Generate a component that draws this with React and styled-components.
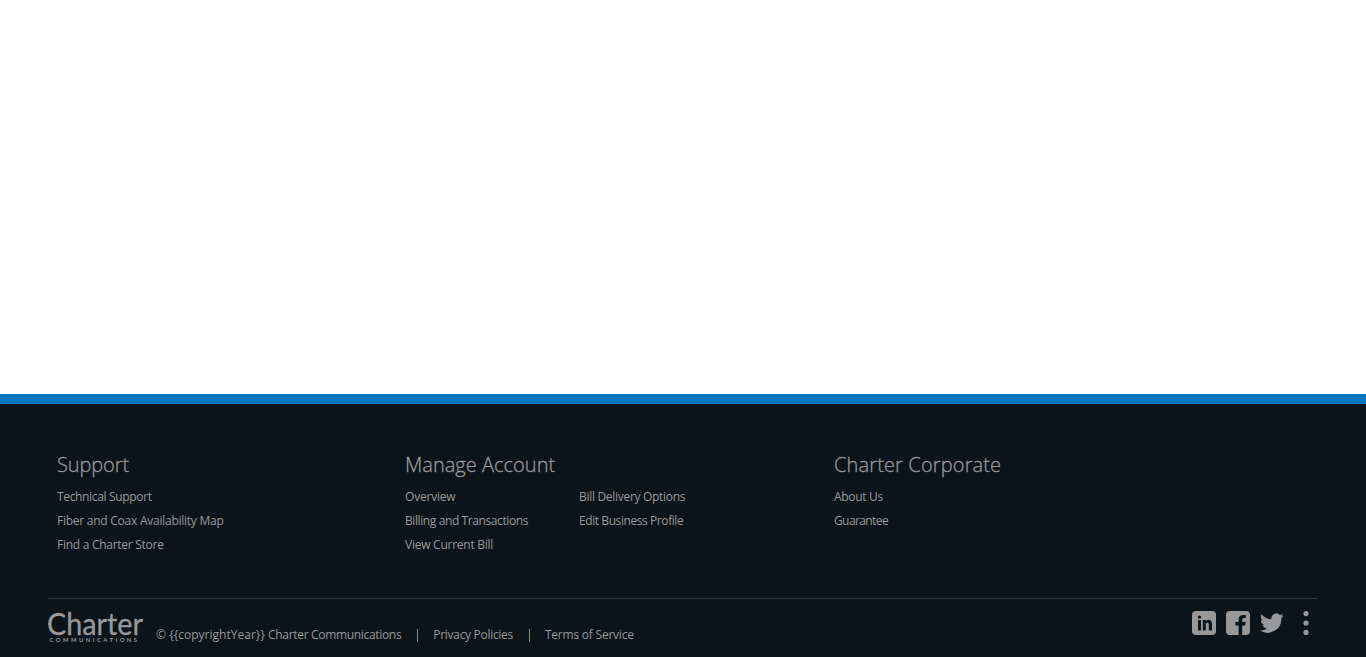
import React from 'react';
import styled, { createGlobalStyle } from 'styled-components';

const GlobalStyle = createGlobalStyle`
  *, *::before, *::after { box-sizing: border-box; }
  body { margin: 0; background: #fff; font-family: 'Open Sans', 'Noto Sans', sans-serif; }
`;

const Page = styled.div`
  display: flex;
  flex-direction: column;
  height: 657px;
  overflow: hidden;
`;

const Content = styled.main`
  flex: 1;
`;

const Footer = styled.footer`
  height: 263px;
  padding: 46px 48px 0;
  border-top: 10px solid #0079c2;
  background: #0b141a;
  color: #98989a;
`;

const Columns = styled.div`
  display: grid;
  grid-template-columns: 348px 429px 1fr;
  height: 148px;
  padding-left: 9px;
`;

const Heading = styled.h2`
  margin: 0 0 3px;
  font-size: 20px;
  font-weight: 300;
  line-height: 30px;
  letter-spacing: ${(p) => p.$track || 0}px;
  -webkit-text-stroke: 0.3px #98989a;
  white-space: nowrap;
`;

const Lists = styled.div`
  display: grid;
  grid-template-columns: 174px 1fr;
`;

const List = styled.ul`
  margin: 0;
  padding: 0;
  list-style: none;
`;

const Item = styled.li`
  height: 24px;
  line-height: 24px;
`;

const Link = styled.a`
  color: inherit;
  font-size: 12px;
  white-space: pre;
  letter-spacing: ${(p) => p.$track || 0}px;
`;

const Bottom = styled.div`
  display: flex;
  height: 59px;
  border-top: 1px solid #30383d;
`;

const Logo = styled.svg`
  display: block;
  width: 96px;
  height: 34px;
  margin-top: 11px;
  fill: #98989a;
  overflow: visible;
`;

const Legal = styled.div`
  display: flex;
  align-items: center;
  height: 24px;
  margin: 23px 0 0 12px;
`;

const Divider = styled.span`
  width: 1px;
  height: 13px;
  margin: 3px 15px 0 16px;
  background: ${(p) => p.$tint};
`;

const Social = styled.div`
  display: flex;
  gap: 10px;
  height: 24px;
  margin: 12px 0 0 auto;
`;

const Icon = styled.svg`
  display: block;
  width: 24px;
  height: 24px;
  fill: #98989a;
`;

const columns = [
  {
    title: 'Support', track: -0.1,
    lists: [[['Technical Support', -0.34], ['Fiber and Coax Availability Map', -0.25], ['Find a Charter Store', -0.27]]],
  },
  {
    title: 'Manage Account', track: 0.02,
    lists: [
      [['Overview', -0.2], ['Billing and Transactions', -0.4], ['View Current Bill', -0.25]],
      [['Bill Delivery Options', -0.3], ['Edit Business Profile', -0.42]],
    ],
  },
  { title: 'Charter Corporate', track: 0.14, lists: [[['About Us', -0.3], ['Guarantee', -0.6]]] },
];

export default function App() {
  return (
    <>
      <GlobalStyle />
      <Page>
        <Content />
        <Footer>
          <Columns>
            {columns.map((c) => (
              <section key={c.title}>
                <Heading $track={c.track}>{c.title}</Heading>
                <Lists>
                  {c.lists.map((l, i) => (
                    <List key={i}>
                      {l.map(([text, track]) => (
                        <Item key={text}><Link $track={track}>{text}</Link></Item>
                      ))}
                    </List>
                  ))}
                </Lists>
              </section>
            ))}
          </Columns>
          <Bottom>
            <Logo viewBox="0 0 96 34" role="img" aria-label="Charter Communications">
              <text x="-1" y="25" fontFamily="Lato" fontSize="31" textLength="96" lengthAdjust="spacingAndGlyphs" stroke="#98989a" strokeWidth="0.3">Charter</text>
              <text x="1.5" y="31.5" fontFamily="Lato" fontWeight="700" fontSize="5.8" textLength="87.5" lengthAdjust="spacing">COMMUNICATIONS</text>
            </Logo>
            <Legal>
              <Link as="span" $track={0.02}>{'© {{copyrightYear}} '}</Link>
              <Link as="span" $track={-0.32}>Charter Communications</Link>
              <Divider $tint="#8a7a94" />
              <Link $track={-0.3}>Privacy Policies</Link>
              <Divider $tint="#85866a" />
              <Link $track={-0.22}>Terms of Service</Link>
            </Legal>
            <Social>
              <Icon viewBox="0 0 24 24">
                <path fillRule="evenodd" d="M4 0H20Q24 0 24 4V20Q24 24 20 24H4Q0 24 0 20V4Q0 0 4 0ZM6 9V19.5H9V9ZM7.5 4.4A1.7 1.7 0 1 0 7.5 7.8A1.7 1.7 0 0 0 7.5 4.4ZM10.8 9V19.5H13.8V13.7C13.8 10.6 16.8 10.7 16.8 13.5V19.5H20V13C20 8.2 15.5 7.8 13.7 10.4V9Z" />
              </Icon>
              <Icon viewBox="0 0 24 24">
                <path d="M4 0H20Q24 0 24 4V20Q24 24 20 24H16.2V14.5H19.2L19.7 10.9H16.2V8.8C16.2 7.7 16.7 7.1 18 7.1H19.8V4.1C15.2 3.4 12.6 4.8 12.6 8.4V10.9H9.4V14.5H12.6V24H4Q0 24 0 20V4Q0 0 4 0Z" />
              </Icon>
              <Icon viewBox="0 0 24 24">
                <path d="M23.6 4.6c-.9.4-1.8.6-2.8.8 1-.6 1.8-1.6 2.1-2.7-.9.6-2 1-3.1 1.2a4.85 4.85 0 0 0-8.3 4.4C7.5 8.1 3.9 6.2 1.5 3.2a4.85 4.85 0 0 0 1.5 6.5c-.8 0-1.5-.2-2.2-.6v.1c0 2.3 1.7 4.3 3.9 4.8-.7.2-1.5.2-2.2.1.6 1.9 2.4 3.3 4.5 3.4A9.8 9.8 0 0 1 .1 19.5a13.75 13.75 0 0 0 21.2-12.2c.9-.7 1.7-1.6 2.3-2.7z" />
              </Icon>
              <Icon viewBox="0 0 24 24">
                <circle cx="12" cy="2.6" r="2.6" />
                <circle cx="12" cy="12" r="2.6" />
                <circle cx="12" cy="21.4" r="2.6" />
              </Icon>
            </Social>
          </Bottom>
        </Footer>
      </Page>
    </>
  );
}
